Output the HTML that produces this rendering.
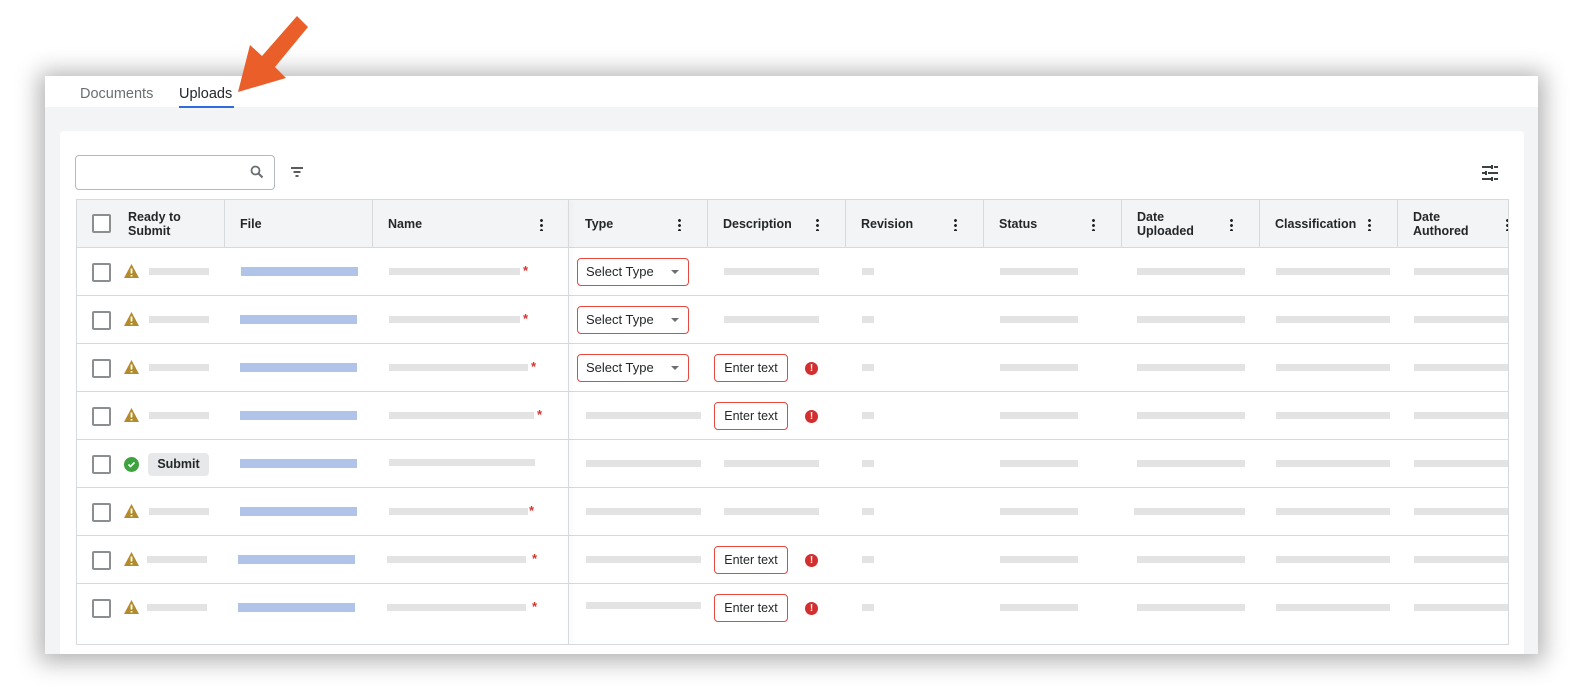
<!DOCTYPE html>
<html><head><meta charset="utf-8">
<style>
*{box-sizing:border-box;margin:0;padding:0}
body{width:1591px;height:694px;background:#fff;position:relative;overflow:hidden;font-family:"Liberation Sans",sans-serif;color:#232729}
.abs{position:absolute}
.win{left:45px;top:76px;width:1493px;height:578px;background:#f3f4f6;box-shadow:0 2px 22px 6px rgba(0,0,0,.3)}
.tabs{left:45px;top:76px;width:1493px;height:31px;background:#fff}
.card{left:60px;top:131px;width:1464px;height:523px;background:#fff;border-radius:4px 4px 0 0}
.tbl{left:76px;top:199px;width:1433px;height:446px;border:1px solid #d6dadc;background:#fff;overflow:hidden}
.hd{left:0;top:0;width:1433px;height:48px;background:#f3f4f6;border-bottom:1px solid #d6dadc}
.vl{position:absolute;top:0;width:1px;height:48px;background:#d6dadc}
.ht{position:absolute;font-size:12.5px;font-weight:bold;color:#232729;line-height:14px}
.dots{position:absolute;width:3px;height:13px;background:radial-gradient(circle,#232729 1.3px,transparent 1.6px) 0 0/3px 5px repeat-y}
.row{position:absolute;left:0;width:1433px;height:48px;border-bottom:1px solid #d6dadc}
.cb{position:absolute;left:15px;top:15px;width:19px;height:19px;border:2px solid #8c8f91;border-radius:2px;background:#fff}
.b{position:absolute;height:7px;background:#e3e3e3;top:20px}
.bl{position:absolute;height:9px;background:#b0c4ea;top:19px}
.st{position:absolute;color:#d9322a;font-size:13px;font-weight:bold;top:15px}
.sel{position:absolute;left:500px;top:10px;width:112px;height:28px;border:1px solid #e5483e;border-radius:4px;font-size:13px;padding-left:8px;line-height:26px}
.sel:after{content:"";position:absolute;right:9px;top:11px;border:4px solid transparent;border-top:4px solid #6a6e70}
.et{position:absolute;left:637px;top:10px;width:74px;height:28px;border:1px solid #e5483e;border-radius:4px;font-size:12.5px;line-height:26px;text-align:center}
.err{position:absolute;left:728px;top:18px;width:13px;height:13px;border-radius:50%;background:#d32f2f;color:#fff;font-size:10px;font-weight:bold;text-align:center;line-height:13px}
.warn{position:absolute;left:47px;top:16px}
.frz{position:absolute;left:491px;top:0;width:1px;height:446px;background:#d6dadc;box-shadow:2px 0 5px rgba(0,0,0,.1)}
</style></head><body>
<div class="abs win"></div>
<div class="abs tabs"></div>
<div class="abs" style="left:80px;top:86px;font-size:14.5px;color:#6a6e70">Documents</div>
<div class="abs" style="left:179px;top:86px;font-size:14.5px;color:#232729">Uploads</div>
<div class="abs" style="left:179px;top:106px;width:55px;height:2px;background:#2f6be0"></div>
<svg class="abs" style="left:0;top:0" width="320" height="100" viewBox="0 0 320 100"><path d="M297 16 L308 27 L275 67 L286 78 L238 92 L250 45 L262 56 Z" fill="#ea5e2a"/></svg>
<div class="abs card"></div>
<div class="abs" style="left:75px;top:155px;width:200px;height:35px;border:1px solid #b4b8ba;border-radius:4px;background:#fff"></div>
<svg class="abs" style="left:250px;top:165px" width="14" height="14" viewBox="0 0 14 14"><circle cx="5.5" cy="5.5" r="4" fill="none" stroke="#6a6e70" stroke-width="1.8"/><path d="M8.5 8.5 L12.5 12.5" stroke="#6a6e70" stroke-width="2"/></svg>
<svg class="abs" style="left:291px;top:167px" width="12" height="10" viewBox="0 0 12 10"><path d="M0 1h12M2.5 5h7M4.5 9h3" stroke="#232729" stroke-width="1.6"/></svg>
<svg class="abs" style="left:1481px;top:164px" width="18" height="18" viewBox="0 0 18 18"><g stroke="#232729" stroke-width="1.8"><path d="M1 3h9M13 3h4M11 1v4M1 9h3M7 9h10M5 7v4M1 15h9M13 15h4M11 13v4"/></g></svg>
<div class="abs tbl">
 <div class="abs hd">
  <div class="vl" style="left:147px"></div><div class="vl" style="left:295px"></div><div class="vl" style="left:630px"></div><div class="vl" style="left:768px"></div><div class="vl" style="left:906px"></div><div class="vl" style="left:1044px"></div><div class="vl" style="left:1182px"></div><div class="vl" style="left:1320px"></div>
  <div class="cb" style="top:14px"></div>
  <div class="ht" style="left:51px;top:10px">Ready to<br>Submit</div>
  <div class="ht" style="left:163px;top:17px">File</div>
  <div class="ht" style="left:311px;top:17px">Name</div><div class="dots" style="left:463px;top:18px"></div>
  <div class="ht" style="left:508px;top:17px">Type</div><div class="dots" style="left:601px;top:18px"></div>
  <div class="ht" style="left:646px;top:17px">Description</div><div class="dots" style="left:739px;top:18px"></div>
  <div class="ht" style="left:784px;top:17px">Revision</div><div class="dots" style="left:877px;top:18px"></div>
  <div class="ht" style="left:922px;top:17px">Status</div><div class="dots" style="left:1015px;top:18px"></div>
  <div class="ht" style="left:1060px;top:10px">Date<br>Uploaded</div><div class="dots" style="left:1153px;top:18px"></div>
  <div class="ht" style="left:1198px;top:17px">Classification</div><div class="dots" style="left:1291px;top:18px"></div>
  <div class="ht" style="left:1336px;top:10px">Date<br>Authored</div><div class="dots" style="left:1429px;top:18px"></div>
 </div>

 <div class="row" style="top:48px">
  <div class="cb"></div><svg class="warn" width="15" height="14" viewBox="0 0 15 14"><path d="M7.5 0L15 14H0Z" fill="#b38b2c"/><path d="M7.5 4.5v5M7.5 11v1.5" stroke="#fff" stroke-width="1.8"/></svg>
  <div class="b" style="left:72px;width:60px"></div><div class="bl" style="left:164px;width:117px"></div>
  <div class="b" style="left:312px;width:131px"></div><div class="st" style="left:446px">*</div>
  <div class="sel">Select Type</div>
  <div class="b" style="left:647px;width:95px"></div><div class="b" style="left:785px;width:12px"></div><div class="b" style="left:923px;width:78px"></div><div class="b" style="left:1060px;width:108px"></div><div class="b" style="left:1199px;width:114px"></div><div class="b" style="left:1337px;width:100px"></div>
 </div>
 <div class="row" style="top:96px">
  <div class="cb"></div><svg class="warn" width="15" height="14" viewBox="0 0 15 14"><path d="M7.5 0L15 14H0Z" fill="#b38b2c"/><path d="M7.5 4.5v5M7.5 11v1.5" stroke="#fff" stroke-width="1.8"/></svg>
  <div class="b" style="left:72px;width:60px"></div><div class="bl" style="left:163px;width:117px"></div>
  <div class="b" style="left:312px;width:131px"></div><div class="st" style="left:446px">*</div>
  <div class="sel">Select Type</div>
  <div class="b" style="left:647px;width:95px"></div><div class="b" style="left:785px;width:12px"></div><div class="b" style="left:923px;width:78px"></div><div class="b" style="left:1060px;width:108px"></div><div class="b" style="left:1199px;width:114px"></div><div class="b" style="left:1337px;width:100px"></div>
 </div>
 <div class="row" style="top:144px">
  <div class="cb"></div><svg class="warn" width="15" height="14" viewBox="0 0 15 14"><path d="M7.5 0L15 14H0Z" fill="#b38b2c"/><path d="M7.5 4.5v5M7.5 11v1.5" stroke="#fff" stroke-width="1.8"/></svg>
  <div class="b" style="left:72px;width:60px"></div><div class="bl" style="left:163px;width:117px"></div>
  <div class="b" style="left:312px;width:139px"></div><div class="st" style="left:454px">*</div>
  <div class="sel">Select Type</div>
  <div class="et">Enter text</div><div class="err">!</div>
  <div class="b" style="left:785px;width:12px"></div><div class="b" style="left:923px;width:78px"></div><div class="b" style="left:1060px;width:108px"></div><div class="b" style="left:1199px;width:114px"></div><div class="b" style="left:1337px;width:100px"></div>
 </div>
 <div class="row" style="top:192px">
  <div class="cb"></div><svg class="warn" width="15" height="14" viewBox="0 0 15 14"><path d="M7.5 0L15 14H0Z" fill="#b38b2c"/><path d="M7.5 4.5v5M7.5 11v1.5" stroke="#fff" stroke-width="1.8"/></svg>
  <div class="b" style="left:72px;width:60px"></div><div class="bl" style="left:163px;width:117px"></div>
  <div class="b" style="left:312px;width:145px"></div><div class="st" style="left:460px">*</div>
  <div class="b" style="left:509px;width:115px"></div>
  <div class="et">Enter text</div><div class="err">!</div>
  <div class="b" style="left:785px;width:12px"></div><div class="b" style="left:923px;width:78px"></div><div class="b" style="left:1060px;width:108px"></div><div class="b" style="left:1199px;width:114px"></div><div class="b" style="left:1337px;width:100px"></div>
 </div>
 <div class="row" style="top:240px">
  <div class="cb"></div>
  <div style="position:absolute;left:47px;top:17px;width:15px;height:15px;border-radius:50%;background:#3ea33f"></div>
  <svg style="position:absolute;left:50px;top:20px" width="9" height="9" viewBox="0 0 9 9"><path d="M1.5 4.5l2 2 4-4" stroke="#fff" stroke-width="1.6" fill="none"/></svg>
  <div style="position:absolute;left:71px;top:13px;width:61px;height:23px;background:#e6e8ea;border-radius:4px;font-size:12.5px;font-weight:bold;text-align:center;line-height:23px">Submit</div>
  <div class="bl" style="left:163px;width:117px"></div>
  <div class="b" style="left:312px;width:146px;top:19px"></div>
  <div class="b" style="left:509px;width:115px"></div><div class="b" style="left:647px;width:95px"></div>
  <div class="b" style="left:785px;width:12px"></div><div class="b" style="left:923px;width:78px"></div><div class="b" style="left:1060px;width:108px"></div><div class="b" style="left:1199px;width:114px"></div><div class="b" style="left:1337px;width:100px"></div>
 </div>
 <div class="row" style="top:288px">
  <div class="cb"></div><svg class="warn" width="15" height="14" viewBox="0 0 15 14"><path d="M7.5 0L15 14H0Z" fill="#b38b2c"/><path d="M7.5 4.5v5M7.5 11v1.5" stroke="#fff" stroke-width="1.8"/></svg>
  <div class="b" style="left:72px;width:60px"></div><div class="bl" style="left:163px;width:117px"></div>
  <div class="b" style="left:312px;width:139px"></div><div class="st" style="left:452px">*</div>
  <div class="b" style="left:509px;width:115px"></div><div class="b" style="left:647px;width:95px"></div>
  <div class="b" style="left:785px;width:12px"></div><div class="b" style="left:923px;width:78px"></div><div class="b" style="left:1057px;width:111px"></div><div class="b" style="left:1199px;width:114px"></div><div class="b" style="left:1337px;width:100px"></div>
 </div>
 <div class="row" style="top:336px">
  <div class="cb"></div><svg class="warn" width="15" height="14" viewBox="0 0 15 14"><path d="M7.5 0L15 14H0Z" fill="#b38b2c"/><path d="M7.5 4.5v5M7.5 11v1.5" stroke="#fff" stroke-width="1.8"/></svg>
  <div class="b" style="left:70px;width:60px"></div><div class="bl" style="left:161px;width:117px"></div>
  <div class="b" style="left:310px;width:139px"></div><div class="st" style="left:455px">*</div>
  <div class="b" style="left:509px;width:115px"></div>
  <div class="et">Enter text</div><div class="err">!</div>
  <div class="b" style="left:785px;width:12px"></div><div class="b" style="left:923px;width:78px"></div><div class="b" style="left:1060px;width:108px"></div><div class="b" style="left:1199px;width:114px"></div><div class="b" style="left:1337px;width:100px"></div>
 </div>
 <div class="row" style="top:384px;border-bottom:none">
  <div class="cb"></div><svg class="warn" width="15" height="14" viewBox="0 0 15 14"><path d="M7.5 0L15 14H0Z" fill="#b38b2c"/><path d="M7.5 4.5v5M7.5 11v1.5" stroke="#fff" stroke-width="1.8"/></svg>
  <div class="b" style="left:70px;width:60px"></div><div class="bl" style="left:161px;width:117px"></div>
  <div class="b" style="left:310px;width:139px"></div><div class="st" style="left:455px">*</div>
  <div class="b" style="left:509px;width:115px;top:18px"></div>
  <div class="et">Enter text</div><div class="err">!</div>
  <div class="b" style="left:785px;width:12px"></div><div class="b" style="left:923px;width:78px"></div><div class="b" style="left:1060px;width:108px"></div><div class="b" style="left:1199px;width:114px"></div><div class="b" style="left:1337px;width:100px"></div>
 </div>
 <div class="frz"></div>
</div>
</body></html>
